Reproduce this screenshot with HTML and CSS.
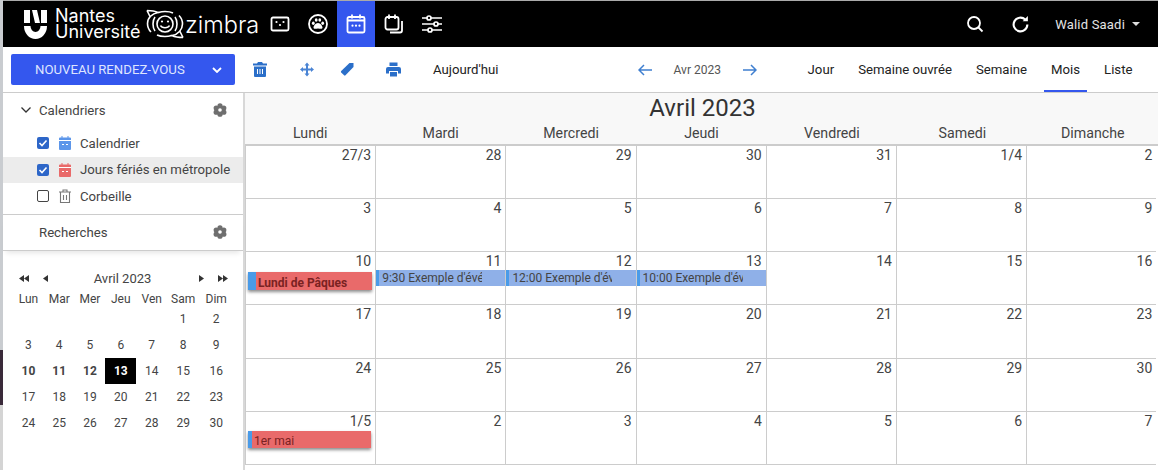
FILE: index.html
```html
<!DOCTYPE html>
<html lang="fr">
<head>
  <meta charset="UTF-8" />
  <title>Zimbra - Calendrier</title>
  <link rel="stylesheet" href="styles.css">
</head>
<body>

<div class="edge"></div>

<div class="app">
  <header class="topbar">
    <div class="brand">
      <svg class="brand-mark" viewBox="0 0 24 29" fill="#fff">
        <rect x="0" y="0" width="6" height="13"/>
        <polygon points="8,0 13,0 16,13 11,13"/>
        <rect x="17" y="0" width="6" height="13"/>
        <path d="M0 16h6.500a5 6 0 0 0 10 0h6.500a11.500 13 0 0 1-23 0z"/>
      </svg>
      <div class="brand-name">Nantes<br>Université</div>
    </div>
    <svg class="zimbra-mark" viewBox="0 0 38 30" fill="none" stroke="#fff" stroke-width="1.600">
      <path d="M1 1.500c5 0 8 .5 11 2C6 4.500 1.500 9 1.500 14.500c0 3 1 6 3.500 8.500M1 1.500c1 2 2 4 3 6"/>
      <path d="M37 28.500c-4 0-8-.5-11-2 6-1 10.500-6 10.500-11.500 0-3-1-6-3.500-8.500M37 28.500c-1-2-2-4-3-6"/>
      <path d="M12 3.500c2-.5 5-1 7-1 3 0 6 .5 8 1.500M26 26.500c-2 .5-5 1-7 1-3 0-6-.5-8-1.500"/>
      <path d="M9 8c-1.500 2-2 4.500-2 7s.5 5 2 7M29 8c1.500 2 2 4.500 2 7s-.5 5-2 7"/>
      <circle cx="19" cy="15" r="8"/>
      <circle cx="16" cy="12.500" r="1.100" fill="#fff" stroke="none"/>
      <circle cx="22" cy="12.500" r="1.100" fill="#fff" stroke="none"/>
      <path d="M14.500 16.500c1.500 3 7.500 3 9 0"/>
    </svg>
    <div class="zimbra-name">zimbra</div>

    <nav class="apps">
      <a class="app-icon">
        <svg viewBox="0 0 20 20" fill="none" stroke="#fff" stroke-width="1.800"><rect x="1.500" y="3.500" width="17" height="13" rx="1.500"/><circle cx="6.500" cy="8" r="1.100" fill="#fff" stroke="none"/><circle cx="13.500" cy="8" r="1.100" fill="#fff" stroke="none"/><circle cx="10" cy="11" r="1.100" fill="#fff" stroke="none"/></svg>
      </a>
      <a class="app-icon">
        <svg viewBox="0 0 20 20" fill="none" stroke="#fff" stroke-width="1.800"><circle cx="10" cy="10" r="9"/><g fill="#fff" stroke="none"><ellipse cx="5.300" cy="9.300" rx="1.400" ry="1.700"/><ellipse cx="8.200" cy="6" rx="1.400" ry="1.800"/><ellipse cx="11.800" cy="6" rx="1.400" ry="1.800"/><ellipse cx="14.700" cy="9.300" rx="1.400" ry="1.700"/><path d="M10 9c2.500 0 4.500 3 4.500 4.500 0 2-2.500 1-4.500 1s-4.500 1-4.500-1C5.500 12 7.500 9 10 9z"/></g></svg>
      </a>
      <a class="app-icon active">
        <svg viewBox="0 0 20 20" fill="none" stroke="#fff" stroke-width="1.800"><rect x="1.500" y="3" width="17" height="15.500" rx="1.500"/><path d="M1.500 6.500h17M6 .5v4M14 .5v4" /><g fill="#fff" stroke="none"><circle cx="6.500" cy="11.700" r="1.100"/><circle cx="10" cy="11.700" r="1.100"/><circle cx="13.500" cy="11.700" r="1.100"/></g></svg>
      </a>
      <a class="app-icon">
        <svg viewBox="0 0 20 20" fill="none" stroke="#fff" stroke-width="1.800"><rect x="1.500" y="3" width="13" height="12.500" rx="2"/><path d="M5 .5v4.500M11 .5v4.500M18 7v9.500a2 2 0 0 1-2 2H6"/></svg>
      </a>
      <a class="app-icon">
        <svg viewBox="0 0 20 20" fill="none" stroke="#fff" stroke-width="1.700"><path d="M0 4h5M9 4h11M0 10h12M16 10h4M0 16h6M10 16h10"/><circle cx="7" cy="4" r="2"/><circle cx="14" cy="10" r="2"/><circle cx="8" cy="16" r="2"/></svg>
      </a>
    </nav>

    <div class="top-tools">
      <svg class="tool-search" viewBox="0 0 18 18" fill="none" stroke="#fff" stroke-width="1.800"><circle cx="8" cy="8" r="6"/><path d="M12.500 12.500l4 4"/></svg>
      <svg class="tool-refresh" viewBox="0 0 18 18" fill="none" stroke="#fff" stroke-width="2"><path d="M15.500 9a6.500 6.500 0 1 1-2-4.700"/><path d="M16 1v5h-5z" fill="#fff" stroke="none"/></svg>
      <span class="user-name">Walid Saadi</span>
      <span class="user-caret"></span>
    </div>
  </header>

  <div class="toolbar">
    <button class="new-btn">
      <span class="new-label">NOUVEAU RENDEZ-VOUS</span>
      <svg class="new-chevron" viewBox="0 0 10 6" fill="none" stroke="#fff" stroke-width="1.800"><path d="M1 1l4 4 4-4"/></svg>
    </button>
    <svg class="act act-trash" viewBox="0 0 14 15" fill="#2b6fc9"><path d="M5 0h4l1 1.500h4v2H0v-2h4zM1 4.500h12V14a1 1 0 0 1-1 1H2a1 1 0 0 1-1-1z"/><path d="M4.500 7v5M7 7v5M9.500 7v5" stroke="#fff" stroke-width="1"/></svg>
    <svg class="act act-move" viewBox="0 0 14 14" fill="#4a84d4"><path d="M7 0l2.500 3H8v3h3V4.500L14 7l-3 2.500V8H8v3h1.500L7 14l-2.500-3H6V8H3v1.500L0 7l3-2.500V6h3V3H4.500z"/></svg>
    <svg class="act act-tag" viewBox="0 0 14 14" fill="#2b6fc9"><path d="M9.500 .5h4v4L5.500 12.800a1 1 0 0 1-1.400 0L1.200 9.900a1 1 0 0 1 0-1.400z"/></svg>
    <svg class="act act-print" viewBox="0 0 15 14" fill="#2b6fc9"><path d="M3.500 0h8v3.500h-8zM2 4.500h11A2 2 0 0 1 15 6.500V11h-3V8.500H3V11H0V6.500a2 2 0 0 1 2-2z"/><path d="M4 9.500h7V14H4z"/></svg>
    <span class="today">Aujourd'hui</span>

    <div class="month-nav">
      <svg class="arrow" viewBox="0 0 14 12" fill="none" stroke="#3f7fd0" stroke-width="1.500"><path d="M14 6H1M6 1L1 6l5 5"/></svg>
      <span class="month-label">Avr 2023</span>
      <svg class="arrow" viewBox="0 0 14 12" fill="none" stroke="#3f7fd0" stroke-width="1.500"><path d="M0 6h13M8 1l5 5-5 5"/></svg>
    </div>

    <div class="tabs">
      <a class="tab">Jour</a>
      <a class="tab">Semaine ouvrée</a>
      <a class="tab">Semaine</a>
      <a class="tab selected">Mois</a>
      <a class="tab">Liste</a>
    </div>
  </div>

  <div class="main">
    <aside class="sidebar">
      <div class="side-head">
        <svg class="side-chevron" viewBox="0 0 10 6" fill="none" stroke="#333" stroke-width="1.300"><path d="M.5.500L5 5 9.500.500"/></svg>
        <span>Calendriers</span>
        <svg class="gear" viewBox="0 0 14 14" fill="#6f6f6f"><circle cx="7" cy="2.800" r="2.600"/><circle cx="3.200" cy="5" r="2.600"/><circle cx="3.200" cy="9.200" r="2.600"/><circle cx="7" cy="11.200" r="2.600"/><circle cx="10.800" cy="9.200" r="2.600"/><circle cx="10.800" cy="5" r="2.600"/><circle cx="7" cy="7" r="3.500"/><circle cx="7" cy="7" r="1.800" fill="#fff"/></svg>
      </div>

      <div class="cal-list">
        <div class="cal-row">
          <span class="check on"><svg viewBox="0 0 12 12" fill="none" stroke="#fff" stroke-width="1.600"><path d="M2.500 6l2.500 2.500 4.500-5"/></svg></span>
          <svg class="cal-icon" viewBox="0 0 12 14" fill="#5c96ea"><path d="M2.500 0h1v1.500h5V0h1v1.500H11a1 1 0 0 1 1 1V13a1 1 0 0 1-1 1H1a1 1 0 0 1-1-1V2.500a1 1 0 0 1 1-1h1.500z"/><path d="M0 4.500h12" stroke="#fff"/><path d="M3 8.500h2M7 8.500h2" stroke="#fff"/></svg>
          <span>Calendrier</span>
        </div>
        <div class="cal-row hilite">
          <span class="check on"><svg viewBox="0 0 12 12" fill="none" stroke="#fff" stroke-width="1.600"><path d="M2.500 6l2.500 2.500 4.500-5"/></svg></span>
          <svg class="cal-icon" viewBox="0 0 12 14" fill="#e96a6a"><path d="M2.500 0h1v1.500h5V0h1v1.500H11a1 1 0 0 1 1 1V13a1 1 0 0 1-1 1H1a1 1 0 0 1-1-1V2.500a1 1 0 0 1 1-1h1.500z"/><path d="M0 4.500h12" stroke="#fff"/><path d="M3 8.500h2M7 8.500h2" stroke="#fff"/></svg>
          <span>Jours fériés en métropole</span>
        </div>
        <div class="cal-row">
          <span class="check"></span>
          <svg class="cal-icon" viewBox="0 0 12 14" fill="none" stroke="#777" stroke-width="1.100"><path d="M0 3h12M4 3V1h4v2M1.500 3v10.500h9V3M4.500 6v5M7.500 6v5"/></svg>
          <span>Corbeille</span>
        </div>
      </div>

      <div class="side-head searches">
        <span>Recherches</span>
        <svg class="gear" viewBox="0 0 14 14" fill="#6f6f6f"><circle cx="7" cy="2.800" r="2.600"/><circle cx="3.200" cy="5" r="2.600"/><circle cx="3.200" cy="9.200" r="2.600"/><circle cx="7" cy="11.200" r="2.600"/><circle cx="10.800" cy="9.200" r="2.600"/><circle cx="10.800" cy="5" r="2.600"/><circle cx="7" cy="7" r="3.500"/><circle cx="7" cy="7" r="1.800" fill="#fff"/></svg>
      </div>

      <div class="mini">
        <div class="mini-title">
          <span class="mini-arrows">
            <svg class="mini-double" viewBox="0 0 10 7" fill="#333"><path d="M5 0v7L0 3.500zM10 0v7L5 3.500z"/></svg>
            <svg class="mini-single" viewBox="0 0 5 7" fill="#333"><path d="M5 0v7L0 3.500z"/></svg>
          </span>
          <span class="mini-month">Avril 2023</span>
          <span class="mini-arrows">
            <svg class="mini-single" viewBox="0 0 5 7" fill="#333"><path d="M0 0v7l5-3.500z"/></svg>
            <svg class="mini-double" viewBox="0 0 10 7" fill="#333"><path d="M0 0v7l5-3.500zM5 0v7l5-3.500z"/></svg>
          </span>
        </div>
        <div class="mini-days">
          <span>Lun</span><span>Mar</span><span>Mer</span><span>Jeu</span><span>Ven</span><span>Sam</span><span>Dim</span>
        </div>
        <div class="mini-grid">
          <span></span><span></span><span></span><span></span><span></span><span>1</span><span>2</span>
          <span>3</span><span>4</span><span>5</span><span>6</span><span>7</span><span>8</span><span>9</span>
          <span class="busy">10</span><span class="busy">11</span><span class="busy">12</span><span class="busy now">13</span><span>14</span><span>15</span><span>16</span>
          <span>17</span><span>18</span><span>19</span><span>20</span><span>21</span><span>22</span><span>23</span>
          <span>24</span><span>25</span><span>26</span><span>27</span><span>28</span><span>29</span><span>30</span>
        </div>
      </div>
    </aside>

    <section class="calendar">
      <div class="cal-head">
        <div class="cal-title">Avril 2023</div>
        <div class="week-names">
          <span>Lundi</span><span>Mardi</span><span>Mercredi</span><span>Jeudi</span><span>Vendredi</span><span>Samedi</span><span>Dimanche</span>
        </div>
      </div>
      <div class="month-grid">
        <div class="day">27/3</div><div class="day">28</div><div class="day">29</div><div class="day">30</div><div class="day">31</div><div class="day">1/4</div><div class="day">2</div>
        <div class="day">3</div><div class="day">4</div><div class="day">5</div><div class="day">6</div><div class="day">7</div><div class="day">8</div><div class="day">9</div>
        <div class="day">10<div class="ev holiday bold">Lundi de Pâques</div></div>
        <div class="day">11<div class="ev timed"><span>9:30 Exemple d'événement</span></div></div>
        <div class="day">12<div class="ev timed"><span>12:00 Exemple d'événement</span></div></div>
        <div class="day">13<div class="ev timed"><span>10:00 Exemple d'événement</span></div></div>
        <div class="day">14</div><div class="day">15</div><div class="day">16</div>
        <div class="day">17</div><div class="day">18</div><div class="day">19</div><div class="day">20</div><div class="day">21</div><div class="day">22</div><div class="day">23</div>
        <div class="day">24</div><div class="day">25</div><div class="day">26</div><div class="day">27</div><div class="day">28</div><div class="day">29</div><div class="day">30</div>
        <div class="day">1/5<div class="ev holiday">1er mai</div></div>
        <div class="day">2</div><div class="day">3</div><div class="day">4</div><div class="day">5</div><div class="day">6</div><div class="day">7</div>
      </div>
    </section>
  </div>
</div>

</body>
</html>
```

FILE: styles.css
```css
* {
  box-sizing: border-box;
}
body {
  margin: 0;
  height: 470px;
  overflow: hidden;
  display: flex;
  background: #fff;
  color: #444;
  font-family: Roboto, "Liberation Sans", sans-serif;
  font-size: 13.200px;
}
.edge {
  width: 3px;
  background: linear-gradient(#c9ccd0 0 350px, #3a2a3a 350px 405px, #d4d4d4 405px);
}
.app {
  flex: 1;
  min-width: 0;
  display: flex;
  flex-direction: column;
}

/* top bar */
.topbar {
  margin-top: 1px;
  height: 46px;
  background: #000;
  color: #fff;
  display: flex;
  align-items: center;
  box-shadow: 0 -1px 0 #aaa;
}
.brand {
  display: flex;
  align-items: center;
  margin-left: 21px;
}
.brand-mark {
  width: 24px;
  height: 29px;
}
.brand-name {
  margin-left: 7px;
  width: 91px;
  font-family: Inter, sans-serif;
  font-size: 18px;
  line-height: 16px;
}
.zimbra-mark {
  width: 38px;
  height: 30px;
}
.zimbra-name {
  margin-left: 1px;
  width: 76px;
  font-family: Inter, sans-serif;
  font-size: 23.500px;
  font-weight: 300;
}
.apps {
  display: flex;
  align-self: stretch;
}
.app-icon {
  width: 38px;
  display: flex;
  align-items: center;
  justify-content: center;
}
.app-icon svg {
  width: 20px;
  height: 20px;
}
.app-icon.active {
  background: #3457ee;
}
.top-tools {
  margin-left: auto;
  display: flex;
  align-items: center;
  padding-right: 18px;
}
.tool-search {
  width: 18px;
  height: 18px;
}
.tool-refresh {
  width: 19px;
  height: 19px;
  margin-left: 27px;
}
.user-name {
  margin-left: 25px;
  color: #e4e4e4;
  font-size: 13px;
  letter-spacing: .2px;
}
.user-caret {
  margin-left: 7px;
  border: 4px solid transparent;
  border-top-color: #ddd;
  border-bottom: 0;
}

/* toolbar */
.toolbar {
  height: 46px;
  border-bottom: 1px solid #ccc;
  display: flex;
  align-items: center;
  position: relative;
}
.new-btn {
  margin-left: 8px;
  width: 224px;
  height: 31px;
  background: #3457ee;
  border: 0;
  border-radius: 2px;
  color: #dfe5ff;
  font: 13.200px Roboto, sans-serif;
  display: flex;
  align-items: center;
  padding: 0 13px 0 24px;
  justify-content: space-between;
}
.new-chevron {
  width: 10px;
  height: 6px;
}
.act {
  width: 14px;
  height: 15px;
}
.act-trash {
  margin-left: 18px;
}
.act-move {
  margin-left: 33px;
}
.act-tag {
  margin-left: 26px;
}
.act-print {
  margin-left: 32px;
  width: 15px;
}
.today {
  margin-left: 32px;
  color: #222;
}
.month-nav {
  margin-left: 139px;
  display: flex;
  align-items: center;
  gap: 22px;
}
.arrow {
  width: 14px;
  height: 12px;
}
.month-label {
  width: 47px;
  color: #555;
  font-size: 12px;
  white-space: nowrap;
}
.tabs {
  margin-left: 44px;
  align-self: stretch;
  display: flex;
  gap: 10px;
}
.tab {
  padding: 0 7px;
  line-height: 45px;
  color: #222;
}
.tab.selected {
  border-bottom: 2px solid #3457ee;
}

/* sidebar */
.main {
  flex: 1;
  display: flex;
  min-height: 0;
}
.sidebar {
  width: 242px;
  border-right: 2px solid #d8d8d8;
  flex-shrink: 0;
}
.side-head {
  height: 34px;
  display: flex;
  align-items: center;
  padding-left: 18px;
  color: #444;
}
.side-chevron {
  width: 10px;
  height: 6px;
  margin-right: 8px;
}
.gear {
  width: 14px;
  height: 14px;
  margin-left: auto;
  margin-right: 16px;
}
.cal-list {
  padding: 3px 0 4px;
  border-bottom: 1px solid #ccc;
}
.cal-row {
  height: 26.500px;
  display: flex;
  align-items: center;
  padding-left: 34px;
  color: #444;
}
.cal-row.hilite {
  background: #ececec;
}
.check {
  width: 12px;
  height: 12px;
  border: 1.500px solid #444;
  border-radius: 2px;
  display: flex;
}
.check.on {
  background: #2d66c8;
  border: 0;
}
.cal-icon {
  width: 12px;
  height: 14px;
  margin: 0 9px 0 10px;
}
.searches {
  height: 36px;
  padding-left: 36px;
  border-bottom: 1px solid #ccc;
  box-shadow: 0 5px 5px -3px rgba(0, 0, 0, .1);
}

/* mini calendar */
.mini {
  padding: 20px 0 0 10px;
  color: #444;
}
.mini-title {
  width: 221px;
  height: 15px;
  display: flex;
  align-items: center;
  justify-content: space-between;
  padding: 0 6px;
}
.mini-month {
  margin-left: -2px;
  font-size: 13px;
}
.mini-arrows {
  display: flex;
  align-items: center;
  gap: 14px;
}
.mini-double {
  width: 10px;
  height: 7px;
}
.mini-single {
  width: 5px;
  height: 7px;
}
.mini-days,
.mini-grid {
  display: grid;
  grid-template-columns: repeat(4, 30.800px) 31px 32px 34px;
  text-align: center;
  font-size: 12px;
}
.mini-days {
  margin-top: 5px;
  line-height: 16px;
}
.mini-grid {
  margin-top: -1px;
  grid-auto-rows: 26px;
  line-height: 26px;
}
.mini-grid .busy {
  font-weight: 700;
}
.mini-grid .now {
  background: #000;
  color: #fff;
}

/* month view */
.calendar {
  flex: 1;
  min-width: 0;
  display: flex;
  flex-direction: column;
}
.cal-head {
  background: #f8f8f8;
  height: 53px;
  padding-top: 1px;
  border-bottom: 2px solid #ccc;
}
.cal-title {
  padding-left: 2px;
  text-align: center;
  font-size: 24px;
  line-height: 29px;
  color: #333;
}
.week-names {
  display: grid;
  grid-template-columns: repeat(7, 1fr);
  text-align: center;
  font-size: 14.200px;
  line-height: 21px;
  color: #444;
}
.month-grid {
  display: grid;
  grid-template-columns: repeat(7, 130.200px);
  grid-auto-rows: 53.170px;
}
.day {
  border-left: 1px solid #ccc;
  border-bottom: 1px solid #ccc;
  text-align: right;
  padding: 0 4px 0 0;
  font-size: 14px;
  line-height: 19px;
  color: #444;
  min-width: 0;
}
.ev {
  text-align: left;
  font-size: 12px;
}
.holiday {
  margin-left: 2px;
  height: 17px;
  width: 123px;
  background: #e96a6a;
  border-left: 4px solid #4a9be8;
  color: #7a2222;
  line-height: 20px;
  padding-left: 2px;
  box-shadow: 0 2px 3px rgba(0, 0, 0, .45);
}
.holiday.bold {
  margin-top: 1px;
  height: 18px;
  width: 124px;
  border-left-width: 8px;
  padding-left: 2px;
  line-height: 23px;
  font-weight: 700;
}
.timed {
  margin: -1px -4px 0 0;
  height: 16px;
  background: #8fb0e8;
  border-left: 3px solid #4a9be8;
  color: #444;
  line-height: 16px;
  padding-left: 3px;
  white-space: nowrap;
}
.timed span {
  display: block;
  width: 100px;
  overflow: hidden;
}
```
